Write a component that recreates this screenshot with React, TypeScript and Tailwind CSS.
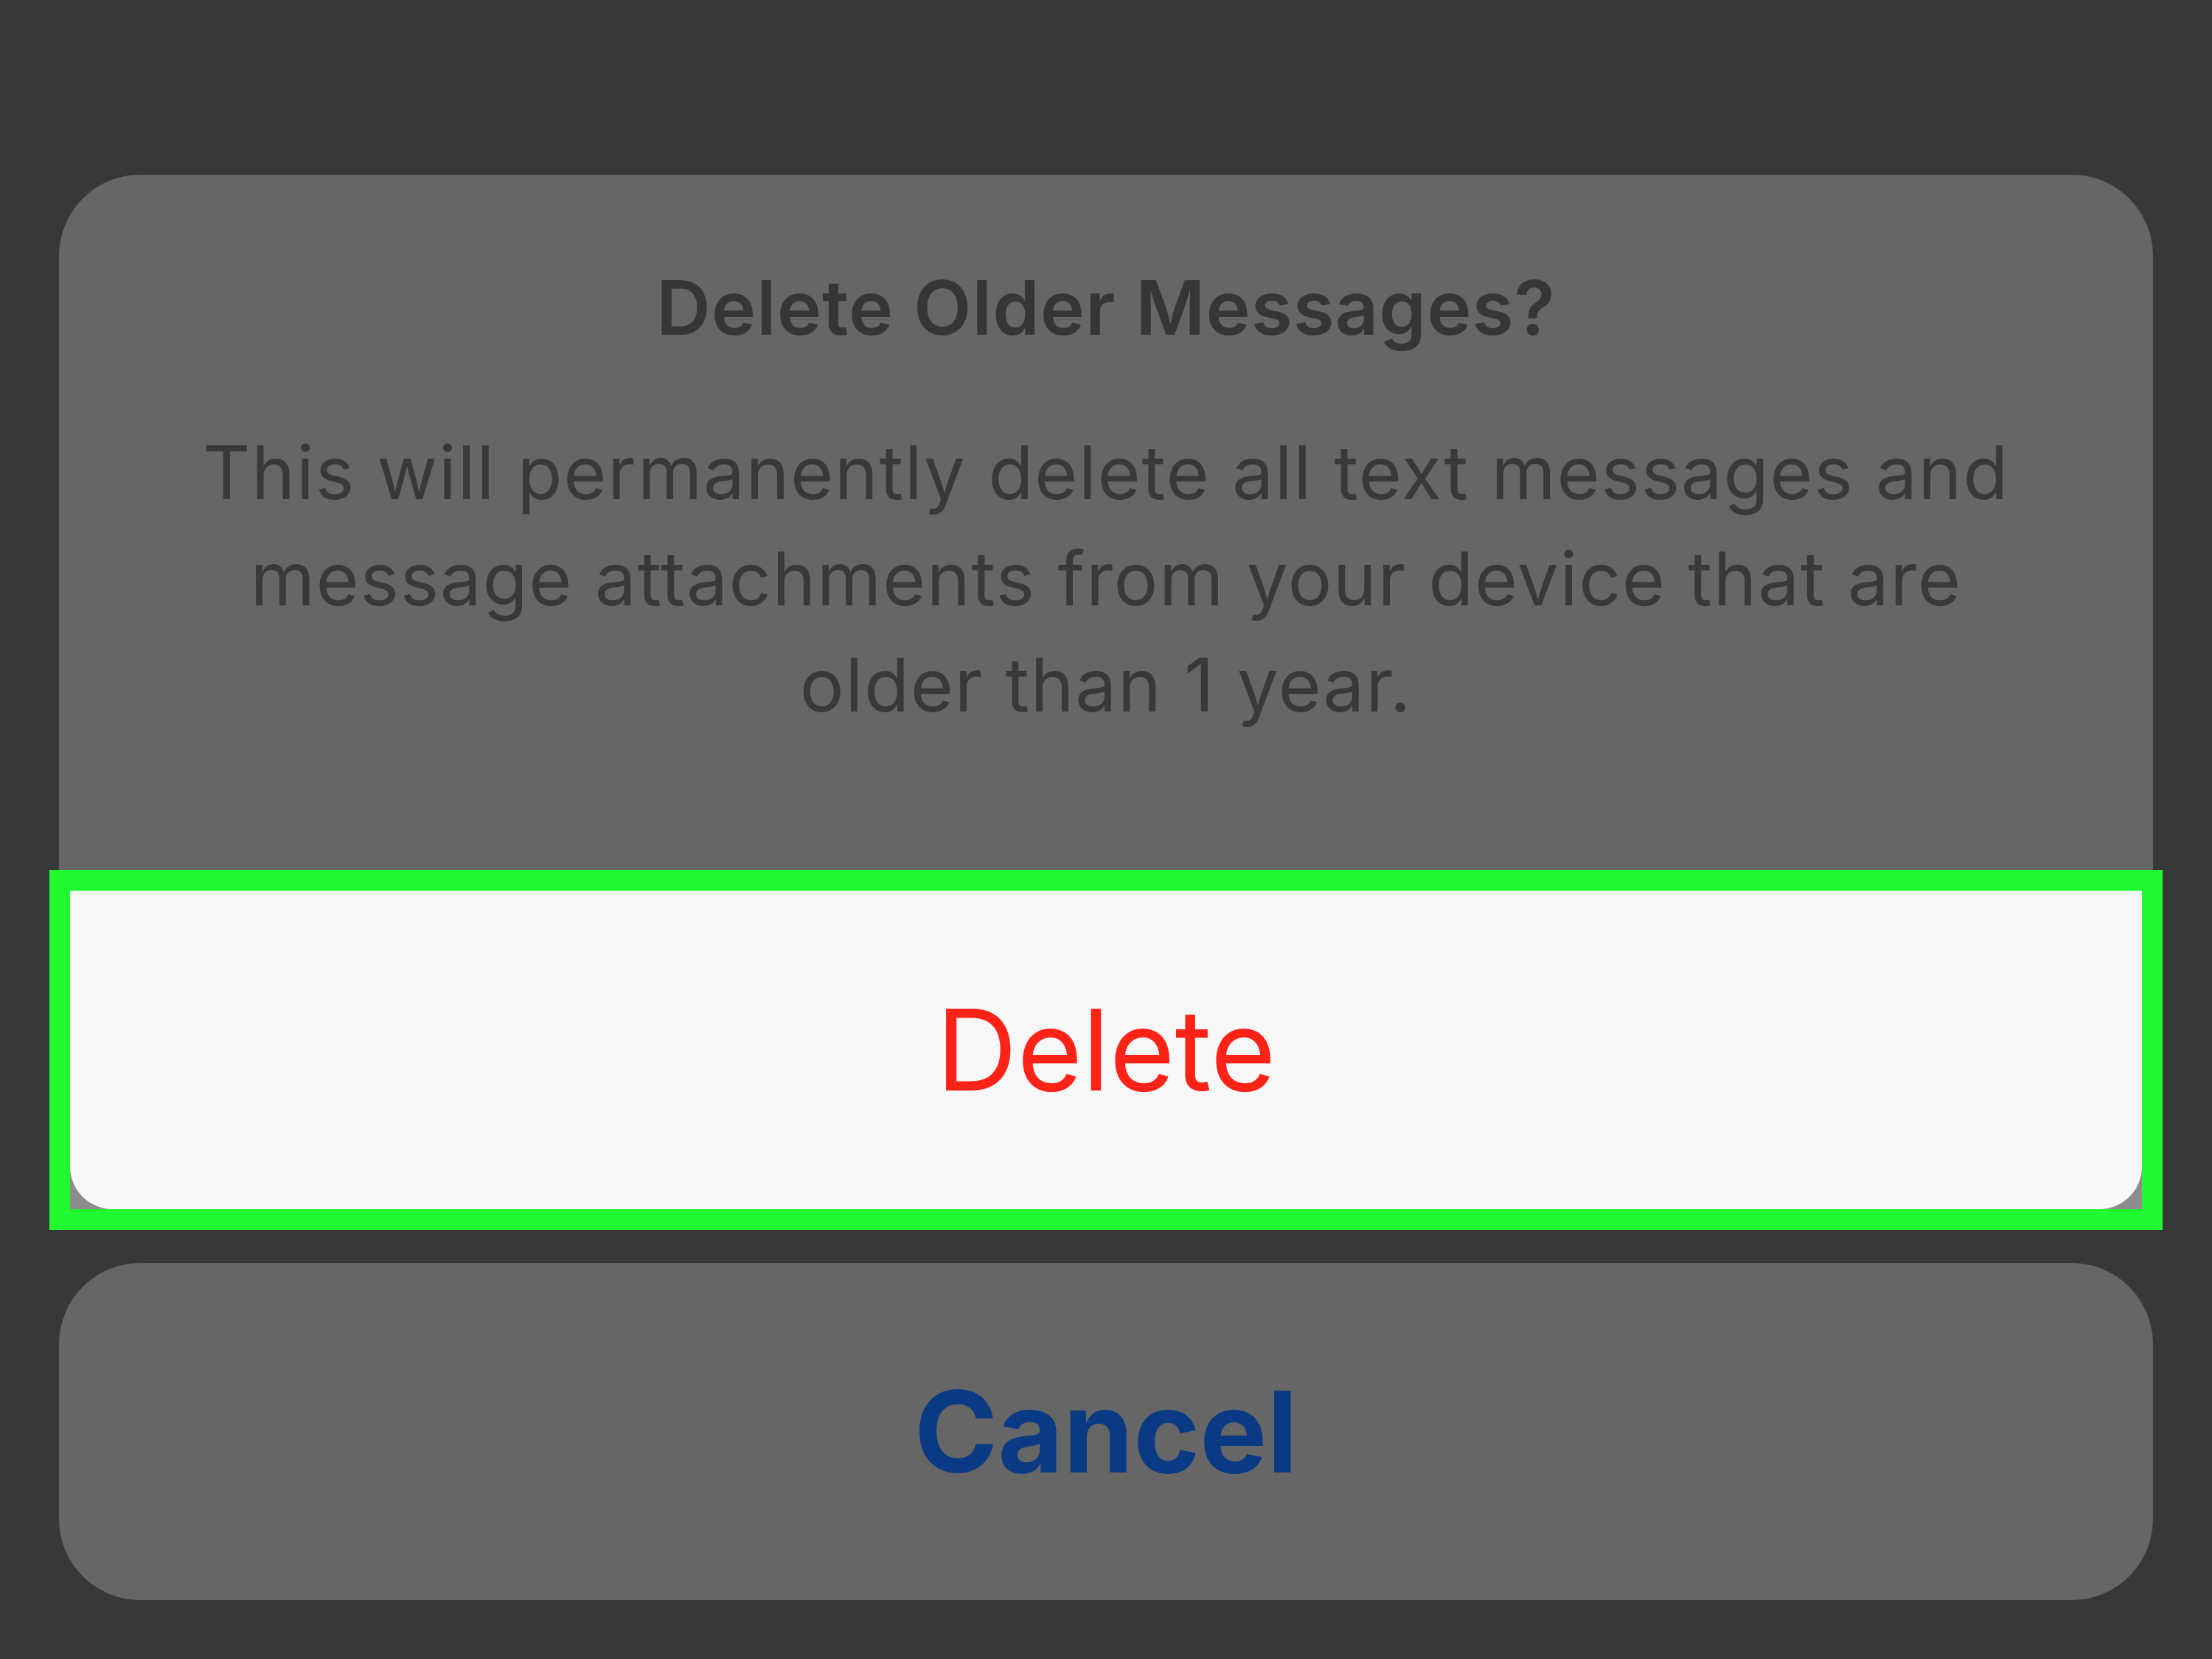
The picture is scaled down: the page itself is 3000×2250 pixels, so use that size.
const App = () => {
  return (
    <div
      className="w-[3000px] h-[2250px] bg-[#38383a] flex flex-col px-[80px] pt-[237px]"
      style={{ fontFamily: "Inter, 'Liberation Sans', sans-serif" }}
    >
      {/* alert body */}
      <div className="bg-[#666666] rounded-t-[110px] h-[943px] flex flex-col items-center pt-[118px]">
        <h1 className="text-[102px] leading-[125px] font-semibold tracking-[1px] text-[#363636]">
          Delete Older Messages?
        </h1>
        <p className="mt-[89px] text-[100px] leading-[144px] tracking-[1.5px] text-center text-[#393939]">
          This will permanently delete all text messages and
          <br />
          message attachments from your device that are
          <br />
          older than 1 year.
        </p>
      </div>

      {/* highlighted delete button */}
      <div className="-mx-[13px] h-[488px] border-[28px] border-[#20fa30] bg-[#8c8c8c]">
        <button className="w-full h-full bg-[#f8f8f9] rounded-b-[58px] flex items-center justify-center">
          <span className="text-[152px] leading-none text-[#ff2216]">Delete</span>
        </button>
      </div>

      <button className="mt-[45px] h-[457px] rounded-[110px] bg-[#666666] flex items-center justify-center">
        <span className="text-[153px] leading-none font-bold text-[#0a3a84]">Cancel</span>
      </button>
    </div>
  );
};

export default App;
